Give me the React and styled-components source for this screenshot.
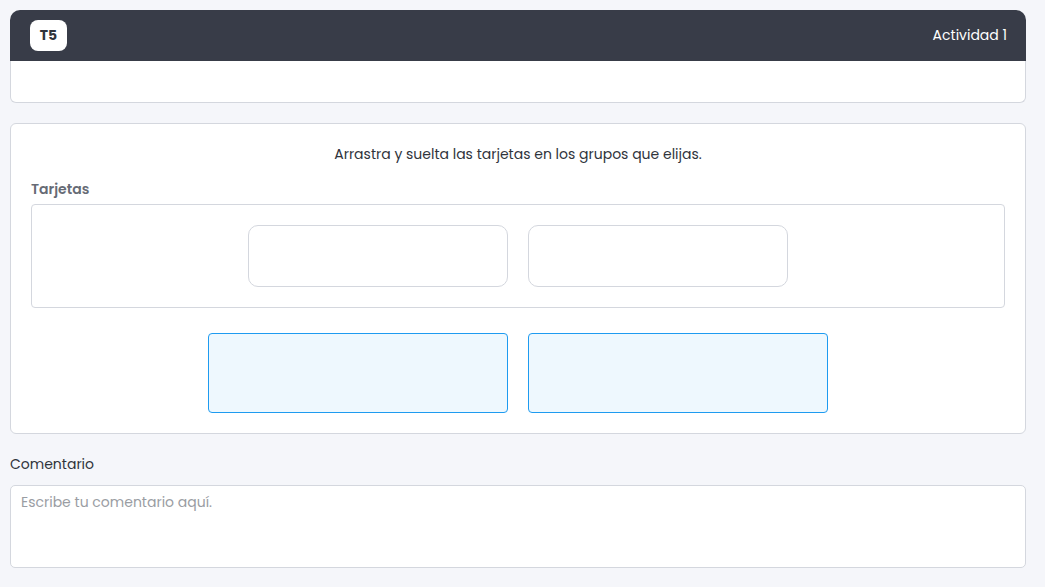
import styled, { createGlobalStyle } from 'styled-components'

const GlobalStyles = createGlobalStyle`
  html, body {
    margin: 0;
    padding: 0;
    background: #f5f6fa;
    font-family: "Poppins", "Open Sans", "Liberation Sans", sans-serif;
    color: #30343c;
  }
  * { box-sizing: border-box; }
`

function App() {
  return (
    <Page>
      <GlobalStyles />
      <HeaderCard>
        <HeaderBar>
          <Badge>T5</Badge>
          <Title>Actividad 1</Title>
        </HeaderBar>
        <HeaderBody />
      </HeaderCard>

      <ActivityCard>
        <Instruction>Arrastra y suelta las tarjetas en los grupos que elijas.</Instruction>
        <SectionLabel>Tarjetas</SectionLabel>
        <CardsBox>
          <DragCard />
          <DragCard />
        </CardsBox>
        <Groups>
          <GroupZone />
          <GroupZone />
        </Groups>
      </ActivityCard>

      <CommentLabel>Comentario</CommentLabel>
      <CommentInput placeholder="Escribe tu comentario aquí." />
    </Page>
  )
}

export default App

const Page = styled.div`
  padding: 10px 19px 20px 10px;
  display: flex;
  flex-direction: column;
`

const HeaderCard = styled.div`
  display: flex;
  flex-direction: column;
`

const HeaderBar = styled.div`
  height: 51px;
  background: #383c48;
  border-radius: 10px 10px 0 0;
  display: flex;
  align-items: center;
  justify-content: space-between;
  padding: 0 19px 0 20px;
`

const Badge = styled.div`
  width: 37px;
  height: 31px;
  border-radius: 8px;
  background: #fff;
  color: #30343c;
  font-weight: 700;
  font-size: 14px;
  display: flex;
  align-items: center;
  justify-content: center;
`

const Title = styled.div`
  color: #fff;
  font-size: 14px;
`

const HeaderBody = styled.div`
  height: 42px;
  background: #fff;
  border: 1px solid #d4d7de;
  border-top: none;
  border-radius: 0 0 6px 6px;
`

const ActivityCard = styled.div`
  margin-top: 20px;
  background: #fff;
  border: 1px solid #d4d7de;
  border-radius: 6px;
  padding: 20px;
  display: flex;
  flex-direction: column;
`

const Instruction = styled.div`
  text-align: center;
  font-size: 14px;
  line-height: 20px;
  color: #30343c;
`

const SectionLabel = styled.div`
  margin-top: 15px;
  font-size: 14px;
  font-weight: 600;
  color: #666b75;
  line-height: 20px;
`

const CardsBox = styled.div`
  margin-top: 5px;
  border: 1px solid #d4d7de;
  border-radius: 4px;
  padding: 20px;
  display: flex;
  justify-content: center;
  gap: 20px;
`

const DragCard = styled.div`
  width: 260px;
  height: 62px;
  border: 1px solid #d4d7de;
  border-radius: 10px;
  background: #fff;
`

const Groups = styled.div`
  margin-top: 25px;
  display: flex;
  justify-content: center;
  gap: 20px;
`

const GroupZone = styled.div`
  width: 300px;
  height: 80px;
  border: 1px solid #1e9bf0;
  border-radius: 4px;
  background: #eef8fe;
`

const CommentLabel = styled.div`
  margin-top: 20px;
  font-size: 14px;
  line-height: 20px;
  color: #30343c;
`

const CommentInput = styled.textarea`
  margin-top: 11px;
  height: 83px;
  width: 100%;
  resize: none;
  border: 1px solid #d4d7de;
  border-radius: 5px;
  padding: 6px 10px;
  font-family: inherit;
  font-size: 14px;
  background: #fff;
  color: #30343c;
  outline: none;
  &::placeholder {
    color: #9a9da3;
  }
`
